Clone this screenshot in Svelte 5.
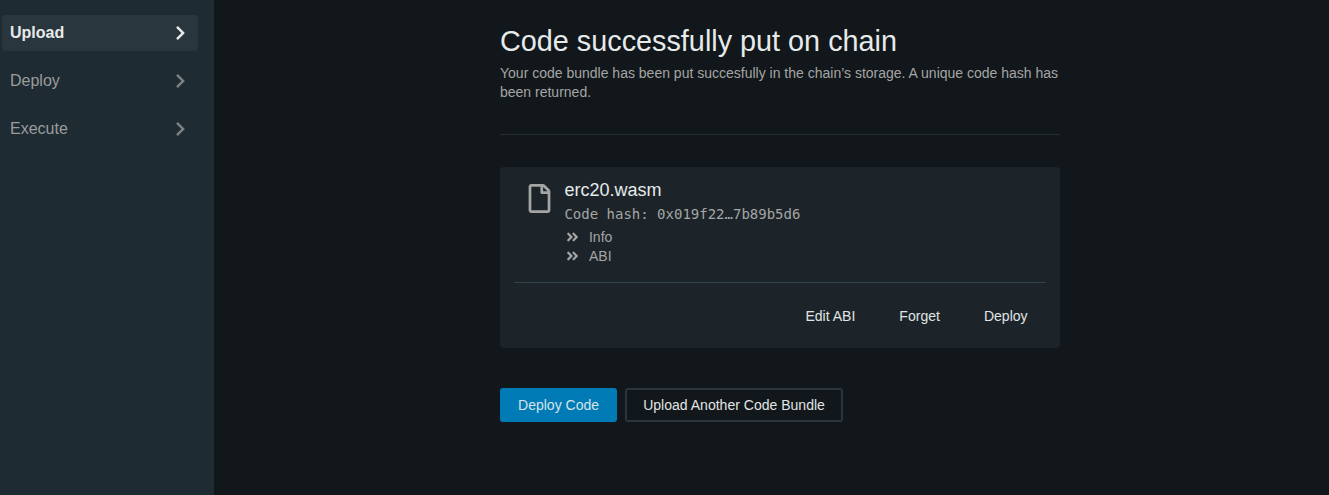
<script>
  const nav = [
    { label: 'Upload', active: true },
    { label: 'Deploy', active: false },
    { label: 'Execute', active: false }
  ];
  const details = ['Info', 'ABI'];
  const actions = ['Edit ABI', 'Forget', 'Deploy'];
</script>

<div class="app">
  <nav class="sidebar">
    {#each nav as item}
      <a class="item" class:active={item.active}>
        <span>{item.label}</span>
        <svg class="chevron" viewBox="0 0 320 512"><path fill="currentColor" d="M285.476 272.971L91.132 467.314c-9.373 9.373-24.569 9.373-33.941 0l-22.667-22.667c-9.357-9.357-9.375-24.522-.04-33.901L188.505 256 34.484 101.255c-9.335-9.379-9.317-24.544.04-33.901l22.667-22.667c9.373-9.373 24.569-9.373 33.941 0L285.475 239.03c9.373 9.372 9.373 24.568.001 33.941z" /></svg>
      </a>
    {/each}
  </nav>
  <main>
    <div class="content">
      <header>
        <h1>Code successfully put on chain</h1>
        <p>Your code bundle has been put succesfully in the chain’s storage. A unique code hash has been returned.</p>
      </header>
      <section class="card">
        <div class="top">
          <svg class="file" viewBox="0 0 384 512"><path fill="currentColor" d="M369.9 97.9L286 14C277 5 264.8-.1 252.1-.1H48C21.5 0 0 21.5 0 48v416c0 26.5 21.5 48 48 48h288c26.5 0 48-21.5 48-48V131.9c0-12.7-5.1-25-14.1-34zM332.1 128H256V51.9l76.1 76.1zM48 464V48h160v104c0 13.3 10.7 24 24 24h104v288H48z" /></svg>
          <div class="info">
            <div class="name">erc20.wasm</div>
            <div class="hash">Code hash: 0x019f22…7b89b5d6</div>
            {#each details as d}
              <div class="detail">
                <svg class="angles" viewBox="0 0 448 512"><path fill="currentColor" d="M224.3 273l-136 136c-9.4 9.4-24.6 9.4-33.9 0l-22.6-22.6c-9.4-9.4-9.4-24.6 0-33.9l96.4-96.4-96.4-96.4c-9.4-9.4-9.4-24.6 0-33.9L54.3 103c9.4-9.4 24.6-9.4 33.9 0l136 136c9.5 9.4 9.5 24.6.1 34zm192-34l-136-136c-9.4-9.4-24.6-9.4-33.9 0l-22.6 22.6c-9.4 9.4-9.4 24.6 0 33.9l96.4 96.4-96.4 96.4c-9.4 9.4-9.4 24.6 0 33.9l22.6 22.6c9.4 9.4 24.6 9.4 33.9 0l136-136c9.4-9.2 9.4-24.4 0-33.8z" /></svg>
                <span>{d}</span>
              </div>
            {/each}
          </div>
        </div>
        <div class="actions">
          {#each actions as a}
            <button class="link">{a}</button>
          {/each}
        </div>
      </section>
      <div class="buttons">
        <button class="primary">Deploy Code</button>
        <button class="outline">Upload Another Code Bundle</button>
      </div>
    </div>
  </main>
</div>

<style>
  :global(body) {
    margin: 0;
    background: #11171a;
  }
  .app {
    display: flex;
    height: 495px;
    box-sizing: border-box;
    overflow: hidden;
    font-family: 'Liberation Sans', Arial, sans-serif;
    font-size: 14px;
    line-height: 19px;
    color: #a5a5a5;
    background: #11171a;
  }
  .sidebar {
    flex: none;
    width: 214px;
    box-sizing: border-box;
    padding: 15px 16px 0 2px;
    display: flex;
    flex-direction: column;
    gap: 12px;
    background: #1f2b32;
  }
  .item {
    display: flex;
    align-items: center;
    justify-content: space-between;
    height: 36px;
    box-sizing: border-box;
    padding: 0 12px 0 8px;
    border-radius: 4px;
    font-size: 16px;
    color: #9a9c9d;
  }
  .item span {
    padding-bottom: 2px;
  }
  .active {
    background: #2a363e;
    color: #e6eaeb;
    font-weight: bold;
  }
  .chevron {
    width: 11px;
    height: 16px;
    color: #7b8083;
  }
  .active .chevron {
    color: #e6eaeb;
  }
  main {
    flex: 1;
    padding-left: 286px;
  }
  .content {
    width: 560px;
  }
  header {
    height: 135px;
    box-sizing: border-box;
    padding-top: 23px;
    border-bottom: 1px solid #262d30;
  }
  h1 {
    margin: 0 0 5px;
    font-size: 28.8px;
    line-height: 36px;
    font-weight: normal;
    color: #e6eaeb;
  }
  p {
    margin: 0;
  }
  .card {
    height: 181px;
    margin-top: 32px;
    box-sizing: border-box;
    padding: 0 14px;
    border-radius: 4px;
    background: #1c2429;
  }
  .top {
    display: flex;
    height: 116px;
    box-sizing: border-box;
    padding: 12px 0 0 14px;
    border-bottom: 1px solid #2f444b;
  }
  .file {
    flex: none;
    width: 23px;
    height: 29px;
    margin: 5px 13.4px 0 0;
  }
  .name {
    font-size: 18px;
    line-height: 22px;
    color: #e6eaeb;
  }
  .hash {
    margin: 3px 0 4px;
    font-family: 'DejaVu Sans Mono', monospace;
    line-height: 20px;
  }
  .detail {
    display: flex;
    align-items: center;
    gap: 10px;
    padding-left: 1.6px;
  }
  .angles {
    width: 13px;
    height: 14px;
    margin-bottom: 2px;
  }
  .actions {
    display: flex;
    justify-content: flex-end;
    gap: 8px;
    padding: 16px 0.4px 0 0;
  }
  button {
    height: 34px;
    margin: 0;
    padding: 0 18px;
    border: 0;
    border-radius: 3px;
    background: none;
    font: inherit;
    font-size: 14.04px;
    color: #e0e4e5;
  }
  .buttons {
    display: flex;
    gap: 8px;
    margin-top: 40px;
  }
  .primary {
    background: #007bb5;
    color: #d5e3ea;
  }
  .outline {
    padding: 0 16px;
    border: 2px solid #2a363c;
  }
</style>
